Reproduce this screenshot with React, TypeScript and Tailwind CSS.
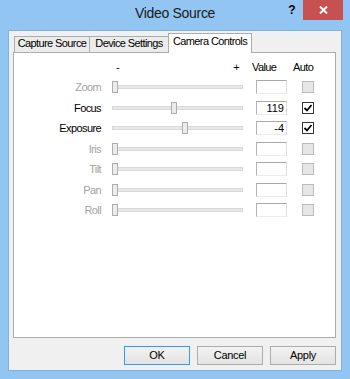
interface Control {
  name: string;
  enabled: boolean;
  value: string;
  pos: number; // thumb offset in px along the track
  auto: boolean;
}

const CONTROLS: Control[] = [
  { name: 'Zoom', enabled: false, value: '', pos: 0, auto: false },
  { name: 'Focus', enabled: true, value: '119', pos: 59, auto: true },
  { name: 'Exposure', enabled: true, value: '-4', pos: 70, auto: true },
  { name: 'Iris', enabled: false, value: '', pos: 0, auto: false },
  { name: 'Tilt', enabled: false, value: '', pos: 0, auto: false },
  { name: 'Pan', enabled: false, value: '', pos: 0, auto: false },
  { name: 'Roll', enabled: false, value: '', pos: 0, auto: false },
];

function Slider({ pos }: { pos: number }) {
  return (
    <div className="relative w-[131px] h-[12px] flex items-center">
      <div className="w-full h-[4px] bg-[#e7e7e7] border border-[#d9d9d9]" />
      <div
        className="absolute top-[0px] w-[6px] h-[12px] bg-[#ececec] border border-[#adadad]"
        style={{ left: pos }}
      />
    </div>
  );
}

function CheckBox({ enabled, checked }: { enabled: boolean; checked: boolean }) {
  if (!enabled) {
    return <div className="shrink-0 w-[12px] h-[12px] bg-[#e6e6e6] border border-[#bcbcbc]" />;
  }
  return (
    <div className="shrink-0 w-[12px] h-[12px] bg-white border border-[#333333] flex items-center justify-center">
      {checked && (
        <svg width="10" height="10" viewBox="0 0 10 10">
          <path d="M1.5 5 L4 7.5 L8.5 2" fill="none" stroke="#000" strokeWidth="1.8" />
        </svg>
      )}
    </div>
  );
}

function Tab({ label, selected, className }: { label: string; selected?: boolean; className: string }) {
  return (
    <div
      className={
        selected
          ? `relative z-10 h-[20px] mb-[-1px] bg-white border border-b-0 border-[#acacac] text-center pt-[1px] leading-[13px] ${className}`
          : `h-[16px] bg-[#ececec] border border-b-0 border-[#acacac] text-center leading-[13px] ${className}`
      }
    >
      {label}
    </div>
  );
}

export default function App() {
  return (
    <div className="w-[350px] h-[379px] bg-[#93c5f2] flex flex-col font-['Liberation_Sans',Arial,sans-serif] text-black">
      {/* Title bar */}
      <div className="h-[30px] flex items-start">
        <div className="w-[65px]" />
        <div className="flex-1 text-center pt-[4px] text-[14px] leading-[18px] tracking-[-0.3px] text-[#1a1a1a]">
          Video Source
        </div>
        <div className="w-[65px] flex items-start">
          <div className="w-[14px] pt-[3px] text-center text-[12px] leading-[14px] font-bold">?</div>
          <div className="ml-[4px] w-[40px] h-[20px] bg-[#c75050] flex items-center justify-center">
            <svg width="9" height="8" viewBox="0 0 9 8">
              <path d="M1 0.5 L8 7.5 M8 0.5 L1 7.5" stroke="#fff" strokeWidth="2" />
            </svg>
          </div>
        </div>
      </div>

      {/* Client area */}
      <div className="mx-[8px] h-[341px] bg-[#f0f0f0] border border-[#7eb2e2] flex flex-col pl-[4px] pr-[5px] text-[11px] tracking-[-0.6px]">
        {/* Tabs */}
        <div className="h-[21px] pt-[2px] flex items-end">
          <Tab label="Capture Source" className="ml-[1px] w-[76px]" />
          <Tab label="Device Settings" className="ml-[-1px] w-[80px]" />
          <Tab label="Camera Controls" selected className="ml-[-1px] w-[84px]" />
        </div>

        {/* Tab panel */}
        <div className="h-[286px] bg-white border border-[#acacac] pt-[4px] flex flex-col">
          {/* header */}
          <div className="h-[20px] flex items-center">
            <div className="w-[98px] shrink-0" />
            <div className="w-[131px] shrink-0 flex justify-between px-[4px]">
              <span>-</span>
              <span>+</span>
            </div>
            <div className="ml-[9px] w-[41px] shrink-0">Value</div>
            <div className="whitespace-nowrap">Auto</div>
          </div>

          {CONTROLS.map((c) => (
            <div key={c.name} className="h-[20.5px] flex items-center">
              <div
                className={`w-[87px] shrink-0 text-right ${c.enabled ? 'text-black' : 'text-[#a3a3a3]'}`}
              >
                {c.name}
              </div>
              <div className="ml-[11px] shrink-0">
                <Slider pos={c.pos} />
              </div>
              <div className="ml-[13px] shrink-0 w-[31px] h-[14px] bg-white border-t border-l border-t-[#a8a8a8] border-l-[#b4b4b4] border-r border-r-[#dedede] border-b border-b-[#ececec] text-right pr-[2px] leading-[12px] tracking-normal">
                {c.value}
              </div>
              <div className="ml-[15px]">
                <CheckBox enabled={c.enabled} checked={c.auto} />
              </div>
            </div>
          ))}
        </div>

        {/* Buttons */}
        <div className="mt-[8px] flex justify-end gap-[7px] tracking-[-0.3px]">
          <button className="w-[66px] h-[19px] bg-gradient-to-b from-[#f2f2f2] to-[#e3e3e3] border border-[#3399ff] leading-[13px]">
            OK
          </button>
          <button className="w-[66px] h-[19px] bg-gradient-to-b from-[#f2f2f2] to-[#e3e3e3] border border-[#acacac] leading-[13px]">
            Cancel
          </button>
          <button className="w-[66px] h-[19px] bg-gradient-to-b from-[#f2f2f2] to-[#e3e3e3] border border-[#acacac] leading-[13px]">
            Apply
          </button>
        </div>
      </div>
    </div>
  );
}
